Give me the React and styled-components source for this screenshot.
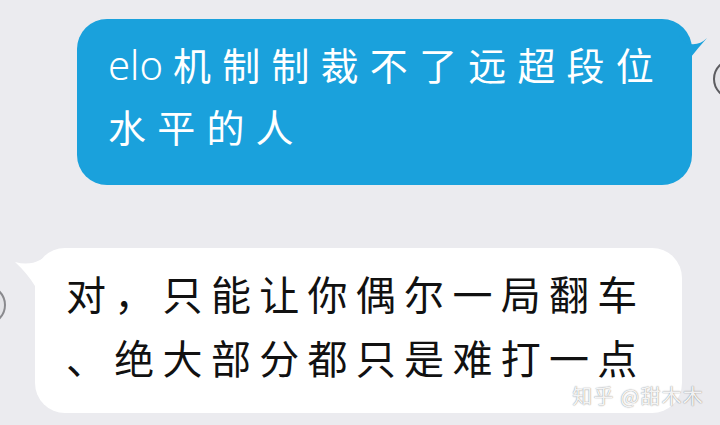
import React from "react";
import styled, { createGlobalStyle } from "styled-components";

const Global = createGlobalStyle`
  html, body {
    margin: 0;
    padding: 0;
    background: #ebebef;
  }
  body {
    font-family: "Noto Sans CJK SC", "Noto Sans", sans-serif;
  }
`;

const Page = styled.div`
  position: relative;
  width: 720px;
  height: 425px;
  overflow: hidden;
  background: #ebebef;
  box-sizing: border-box;
  padding-top: 19px;
  display: flex;
  flex-direction: column;
  gap: 63px;
`;

const Row = styled.div`
  display: flex;
  align-items: flex-start;
  padding-left: ${(p) => p.$inset}px;
  gap: ${(p) => p.$gap}px;
`;

const Avatar = styled.div`
  flex-shrink: 0;
  width: 40px;
  height: 40px;
  border-radius: 50%;
  box-sizing: border-box;
  border: 2px solid ${(p) => p.$ring};
  background: #e4e4e8;
  margin-top: ${(p) => p.$top}px;
  margin-left: ${(p) => p.$left || 0}px;
`;

const Bubble = styled.div`
  position: relative;
  flex-shrink: 0;
  box-sizing: border-box;
  width: ${(p) => p.$w}px;
  height: ${(p) => p.$h}px;
  border-radius: 30px;
  background: ${(p) => p.$bg};
  color: ${(p) => p.$fg};
  padding: ${(p) => p.$pad};
  display: flex;
  flex-direction: column;
  gap: ${(p) => p.$gap}px;
  font-family: "Noto Sans CJK SC", "Noto Sans", sans-serif;
  font-size: ${(p) => p.$size}px;
  letter-spacing: ${(p) => p.$track}px;
  white-space: nowrap;
`;

const Line = styled.div`
  height: 44px;
  line-height: 44px;
`;

const Latin = styled.span`
  font-family: "Noto Sans", "Liberation Sans", sans-serif;
  font-weight: 300;
  font-size: 40px;
  letter-spacing: 0;
  margin-right: 10px;
`;

const Tail = styled.svg`
  position: absolute;
  top: 0;
  overflow: visible;
  ${(p) => (p.$side === "right" ? "right: 0;" : "left: 0;")}
`;

const Watermark = styled.div`
  position: absolute;
  right: 16px;
  bottom: 18px;
  font-family: "Noto Sans CJK SC", "Noto Sans", sans-serif;
  font-size: 20px;
  line-height: 22px;
  letter-spacing: 1.2px;
  color: rgba(255, 255, 255, 0.92);
  text-shadow: 0 0 1px rgba(0, 0, 0, 0.45), 0 0 2px rgba(0, 0, 0, 0.15);
`;

/* small horn at the sender bubble's top-right corner */
function RightTail({ color }) {
  return (
    <Tail $side="right" width="1" height="1">
      <path d="M -12 16 L -5 24 Q 7 28 16 19 Q 7 29 0 38 L -12 38 Z" fill={color} />
    </Tail>
  );
}

/* matching horn at the reply bubble's top-left corner */
function LeftTail({ color }) {
  return (
    <Tail $side="left" width="1" height="1">
      <path d="M 12 8 L 5 12 Q -6 18 -20 14 Q -8 25 0 38 L 12 38 Z" fill={color} />
    </Tail>
  );
}

export default function App() {
  return (
    <>
      <Global />
      <Page>
        <Row $inset={77} $gap={21}>
          <Bubble
            $w={615}
            $h={166}
            $bg="#1aa1dc"
            $fg="#ffffff"
            $pad="23px 0 0 31px"
            $gap={18}
            $size={38}
            $track={11.2}
          >
            <RightTail color="#1aa1dc" />
            <Line>
              <Latin>elo</Latin>机制制裁不了远超段位
            </Line>
            <Line>水平的人</Line>
          </Bubble>
          <Avatar $top={40} $ring="#5c5c60" />
        </Row>
        <Row $inset={0} $gap={29}>
          <Avatar $top={37} $left={-34} $ring="#8a8a8e" />
          <Bubble
            $w={647}
            $h={165}
            $bg="#ffffff"
            $fg="#111111"
            $pad="23px 0 0 31px"
            $gap={20}
            $size={40}
            $track={8.3}
          >
            <LeftTail color="#ffffff" />
            <Line>对，只能让你偶尔一局翻车</Line>
            <Line>、绝大部分都只是难打一点</Line>
          </Bubble>
        </Row>
        <Watermark>知乎 @甜木木</Watermark>
      </Page>
    </>
  );
}
